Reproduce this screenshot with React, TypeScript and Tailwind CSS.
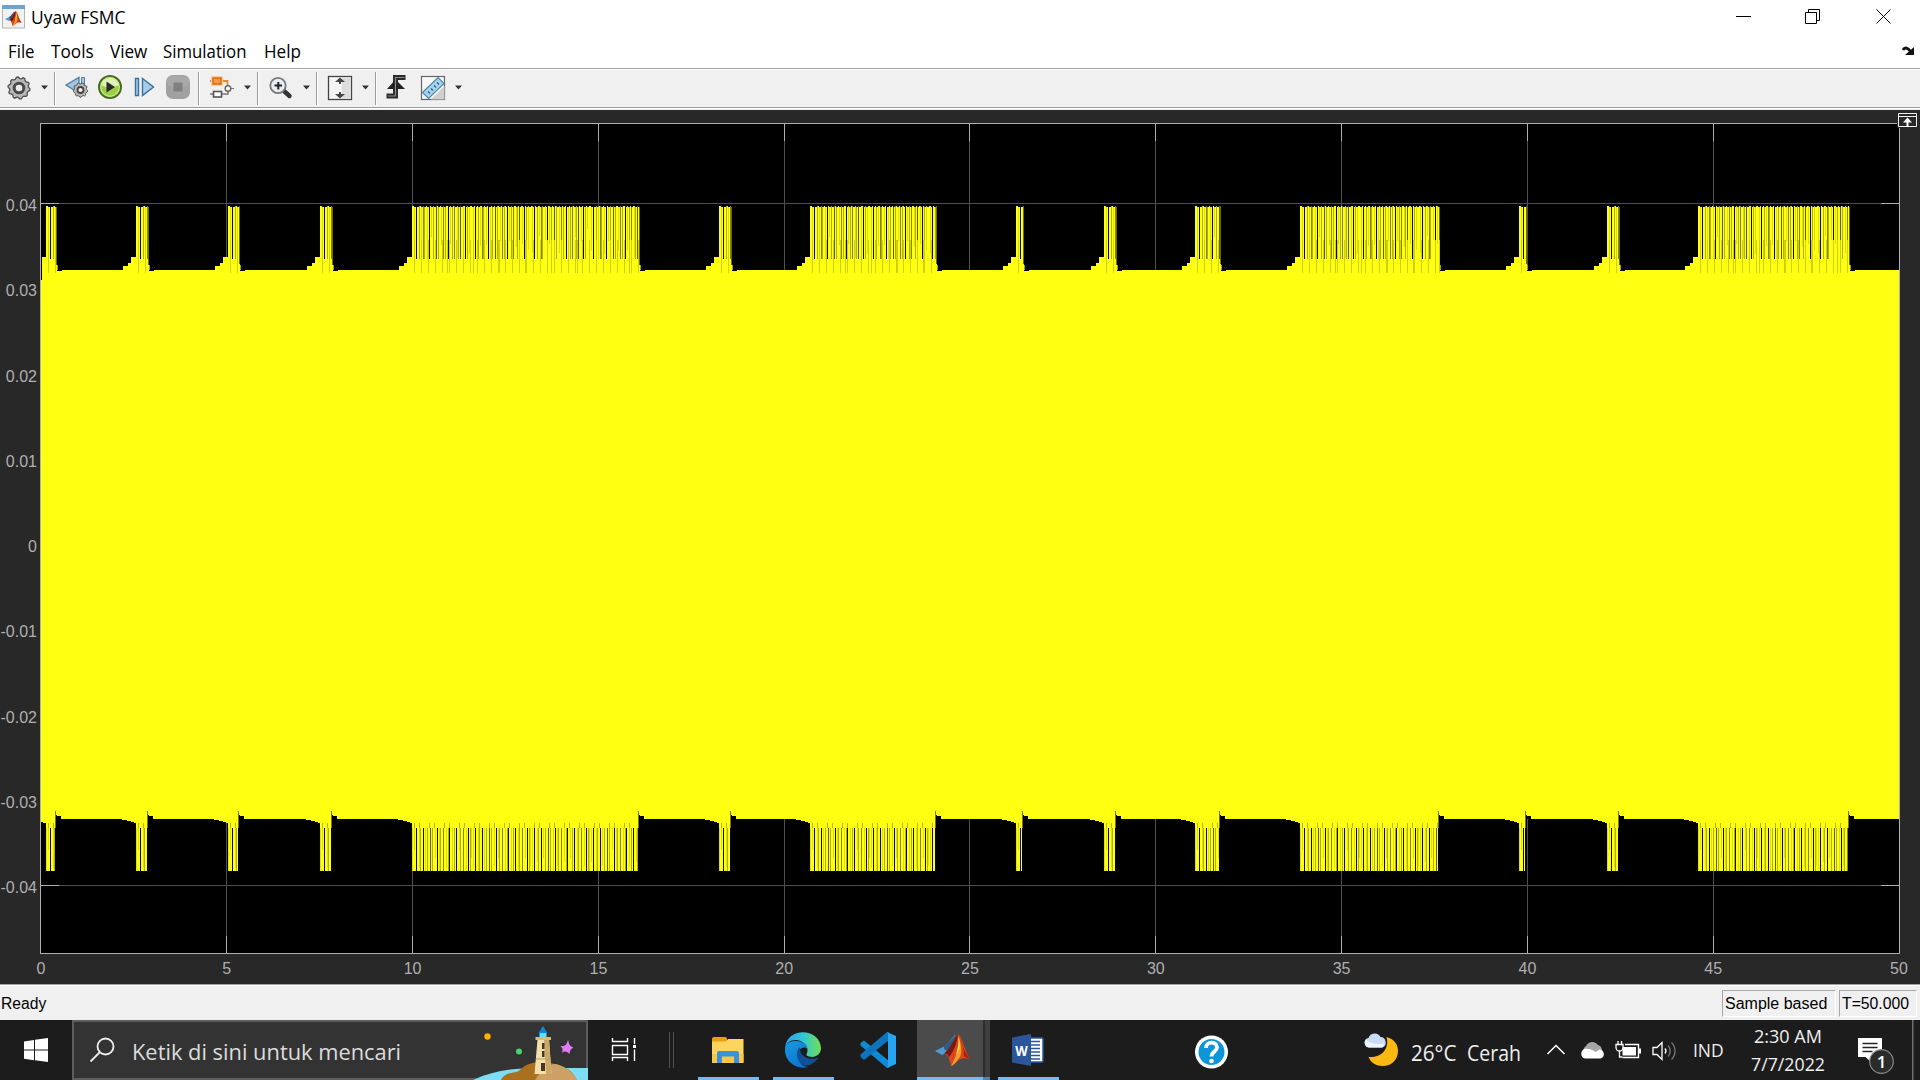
import React, { useLayoutEffect, useRef, useState } from 'react';

/* Text squeezed or stretched to a given advance width. */
function Fit({ w, className = '', children }: { w: number; className?: string; children: React.ReactNode }) {
  const ref = useRef<HTMLSpanElement>(null);
  const [k, setK] = useState(1);
  useLayoutEffect(() => {
    if (ref.current) setK(w / ref.current.offsetWidth);
  }, [w]);
  return (
    <span className={'block shrink-0 whitespace-nowrap ' + className} style={{ width: w }}>
      <span ref={ref} className="inline-block origin-left" style={{ transform: `scaleX(${k})` }}>
        {children}
      </span>
    </span>
  );
}

/* A drawing cell whose viewBox is expressed in window coordinates. */
function Cell({ x, y, w, h, children }: { x: number; y: number; w: number; h: number; children?: React.ReactNode }) {
  return (
    <svg className="block shrink-0" width={w} height={h} viewBox={`${x} ${y} ${w} ${h}`} fill="none">
      {children}
    </svg>
  );
}

function MatlabMark() {
  return (
    <g>
      <path d="M0 17 L9 12.5 C14 10 17 3 20 1 L23 6 L15 23 C13 20 10 19 7 21 Z" fill="#4f9bd0" />
      <path d="M9 12.5 C14 10 17 3 22 1 L15 19 L9 15 Z" fill="#2c5d8a" />
      <path d="M23 0 C19 5 16 13 9 20 C12 19 14 23 16 32 C22 29 24 22 35 25 C30 18 27 2 23 0Z" fill="#d8471c" />
      <path d="M23 0 C19 5 16 13 9 20 C12 19 13 20 14 23 C19 17 22 9 23 0Z" fill="#7c1712" />
      <path d="M23.5 2 C24 12 22 22 16 32 C20 31 22 26 25 23 C28 17 25 6 23.5 2Z" fill="#f79a2c" />
      <path d="M23.5 3 C24 9 23 15 21 20 C26 17 25 8 23.5 3Z" fill="#ffe04a" />
      <path d="M25 3 C27 10 29 18 35 25 L29 22.5 C29 15 27 8 25 3Z" fill="#a91f15" />
    </g>
  );
}

const gearPath = (cx: number, cy: number, r: number, n: number) => {
  const pts: string[] = [];
  for (let i = 0; i < n * 4; i++) {
    const a = ((i + 0.5) / (n * 4)) * Math.PI * 2;
    const rr = i % 4 < 2 ? r : r * 0.86;
    pts.push(`${(cx + Math.cos(a) * rr).toFixed(2)},${(cy + Math.sin(a) * rr).toFixed(2)}`);
  }
  return pts.join(' ');
};

const Caret = ({ x }: { x: number }) => <path d={`M${x - 3.5} 85.5h7l-3.5 4z`} fill="#333" />;
const Sep = ({ x }: { x: number }) => (
  <g shapeRendering="crispEdges">
    <rect x={x} y={72} width={1} height={33} fill="#9b9b9b" />
    <rect x={x + 1} y={72} width={1} height={33} fill="#fff" />
  </g>
);

function Toolbar() {
  const T = (x: number, w: number, c?: React.ReactNode) => (
    <Cell x={x} y={70} w={w} h={37}>
      {c}
    </Cell>
  );
  return (
    <div className="flex h-[42px] shrink-0 flex-col bg-[#f0f0f0]">
      <div className="h-px bg-[#a0a0a0]" />
      <div className="h-px bg-white" />
      <div className="flex h-[37px]">
        {T(0, 36, (
          <g>
            <polygon points={gearPath(19, 88, 11, 10)} fill="#b9b9b9" stroke="#505050" strokeWidth={1.3} />
            <circle cx={19} cy={88} r={4.8} fill="#eee" stroke="#4a4a4a" strokeWidth={3} />
          </g>
        ))}
        {T(36, 24, <g><Caret x={44.5} /><Sep x={54} /></g>)}
        {T(60, 34, (
          <g>
            <path d="M66 85 L79 77.5 V93Z" fill="#a5c6df" stroke="#4c7da5" strokeWidth={1.3} />
            <path d="M81.5 77.5h3v13h-3z" fill="#a5c6df" stroke="#4c7da5" />
            <polygon points={gearPath(80.5, 90, 7.2, 9)} fill="#b8b8b8" stroke="#555" />
            <circle cx={80.5} cy={90} r={3} fill="#eee" stroke="#444" strokeWidth={1.8} />
          </g>
        ))}
        {T(94, 34, (
          <g>
            <circle cx={110} cy={87} r={11} fill="#9bcf45" stroke="#4b6a22" strokeWidth={2} />
            <path d="M101 85a9.2 9.2 0 0 1 18 0c-5 3-13 3-18 0z" fill="#e0f3b8" />
            <circle cx={110} cy={87} r={9.3} stroke="#cdea90" strokeWidth={1.2} />
            <path d="M106.5 81.5 L115 87 L106.5 92.5Z" fill="#2b2b2b" />
          </g>
        ))}
        {T(128, 32, (
          <g fill="#a9cce6" stroke="#37709d" strokeWidth={1.4}>
            <path d="M135.5 78.5h3v17h-3z" />
            <path d="M142.5 78.5 L153.5 87 L142.5 95.5Z" />
          </g>
        ))}
        {T(160, 44, (
          <g>
            <rect x={166} y={75} width={24} height={24} rx={7} fill="#a1a1a1" />
            <rect x={167} y={76} width={22} height={11} rx={6} fill="#a9a9a9" />
            <rect x={173.5} y={82.5} width={9} height={9} fill="#808080" />
            <Sep x={198} />
          </g>
        ))}
        {T(204, 34, (
          <g>
            <path d="M222 94h6v-3M210 81h3M210 94h4" stroke="#777" strokeWidth={1.5} />
            <path d="M222 81h5.500v4" stroke="#e28a3c" strokeWidth={1.8} />
            <rect x={211} y={76} width={12} height={10} fill="#fbd28f" />
            <rect x={213} y={78} width={8} height={6} fill="#f29b45" stroke="#d96a12" strokeWidth={1.5} />
            <rect x={213.5} y={91.5} width={8} height={5.5} fill="#fff" stroke="#555" strokeWidth={1.6} />
            <circle cx={228} cy={88.5} r={2.8} fill="#fff" stroke="#666" strokeWidth={1.5} />
            <path d="M231 88.500h3" stroke="#777" />
          </g>
        ))}
        {T(238, 25, <g><Caret x={247.5} /><Sep x={257} /></g>)}
        {T(263, 34, (
          <g>
            <path d="M284 91 L289.500 96" stroke="#333" strokeWidth={4.4} strokeLinecap="round" />
            <circle cx={278} cy={85.5} r={7.7} fill="#e9eef2" stroke="#777" strokeWidth={1.8} />
            <path d="M274.500 85.500h7.500M278.300 82v7.500" stroke="#222" strokeWidth={2} />
          </g>
        ))}
        {T(297, 25, <g><Caret x={306.5} /><Sep x={316} /></g>)}
        {T(322, 34, (
          <g>
            <rect x={328.5} y={76.5} width={23} height={23} fill="#f4f4f4" stroke="#444" strokeWidth={1.3} />
            <path d="M342 77h9v22h-9z" fill="#ddd" />
            <path d="M335 82 L340 77.500 L345 82Z M335 94 L340 98.500 L345 94Z" fill="#444" />
            <path d="M340 80v4M340 92v4" stroke="#444" strokeWidth={2} />
          </g>
        ))}
        {T(356, 25, <g><Caret x={365.5} /><Sep x={375} /></g>)}
        {T(381, 34, (
          <g>
            <path d="M386.500 96H395.500V77.500H405.500" stroke="#2b2b2b" strokeWidth={5} />
            <path d="M387 89 L395.500 79.500 L405 89Z" fill="#222" />
            <path d="M388 96H395.500V77.500H404.500" stroke="#8a8a8a" strokeWidth={1.2} />
          </g>
        ))}
        {T(415, 34, (
          <g>
            <rect x={421.5} y={76.5} width={23} height={23} fill="#f7f7f7" stroke="#666" strokeWidth={1.2} />
            <path d="M431 99.500 L444.500 86V99.500Z" fill="#cfcfcf" />
            <path d="M422.500 92.500 L438 77.500 L444 83.500 L428.500 98.500Z" fill="#a5d3ee" stroke="#4f86ac" strokeWidth={1.2} />
            <path d="M428 91.500l2 2M431 88.500l2 2M434 85.500l2 2M437 82.500l2 2" stroke="#285f88" strokeWidth={1.2} />
          </g>
        ))}
        {T(449, 20, <Caret x={458.5} />)}
      </div>
      <div className="h-px bg-[#a0a0a0]" />
      <div className="h-px bg-white" />
      <div className="h-px bg-[#f0f0f0]" />
    </div>
  );
}

const bursts: [number, number][] = [
  [46, 57], [136, 149], [228, 240], [320, 333], [412, 640], [719, 732], [810, 937],
  [1016, 1024], [1104, 1117], [1195, 1221], [1300, 1440], [1519, 1527], [1607, 1620], [1698, 1850],
];
const gridX = [226, 412, 598, 784, 969, 1155, 1341, 1527, 1713];
const shades: Record<string, string> = { K: '#0a0a00', D: '#5c5c00', d: '#858500', m: '#b0b00c', l: '#dede10' };
const upper = 'YYlYKYYmYlYdmYYlYKYlYmYYDYmYYlYdYmYYKYlYmYdYYlmYDYYlYKYmYlY';
const lower = 'lYlYKYYlmYYKYlYmYYDYmYYlYKYlmYYdYYlYmKYYlYmYKYYlmYYdYYlYKYm';
const depths = [52, 30, 38, 47, 22, 40, 52, 34, 44];

function Burst({ a, b }: { a: number; b: number }) {
  const out: React.ReactNode[] = [];
  const n = b - a;
  for (let i = 0; i < n; i++) {
    const x = a + i;
    const c = upper[i % upper.length];
    const top = (i * 5) % 17 < 7 ? 206 : 207;
    out.push(<rect key={'t' + i} x={x} y={top} width={1} height={271 - top} />);
    if (i === n - 1) out.push(<rect key={'te'} x={x} y={top} width={1} height={58} fill="#6f6f00" />);
    else if (c !== 'Y' && i > 0) {
      const h = c === 'l' ? depths[i % 9] : 259 - top;
      out.push(<rect key={'u' + i} x={x} y={c === 'K' ? 206 : top} width={1} height={c === 'K' ? 53 : h} fill={shades[c]} />);
    }
    if (i % 7 === 2 || i % 26 === 9) out.push(<rect key={'v' + i} x={x} y={240} width={1} height={33} fill="#d0d00e" />);
  }
  const m = n - 2;
  for (let i = 0; i < m; i++) {
    const x = a + i;
    const c = lower[i % lower.length];
    out.push(<rect key={'b' + i} x={x} y={819} width={1} height={52} />);
    if (c !== 'Y') {
      const h = c === 'l' ? depths[(i * 2) % 9] : 43;
      out.push(<rect key={'w' + i} x={x} y={828} width={1} height={Math.min(43, h)} fill={shades[c]} />);
    }
    if (i % 5 === 2 && i % 3 !== 0) out.push(<rect key={'z' + i} x={x} y={823} width={1} height={5} fill="#b8b80c" />);
  }
  return (
    <g fill="#ffff11">
      {a < 50 ? (
        <g>
          <rect x={42} y={257} width={6} height={14} />
          <rect x={41} y={819} width={5} height={3} />
          <rect x={43} y={819} width={3} height={4} />
        </g>
      ) : (
        <g>
          <path d={`M${a - 13} 271v-5h5v-3h3v-6h5v14z`} />
          <path d={`M${a - 14} 819h14v4h-2v-1h-3v-1h-4v-1h-5z`} />
        </g>
      )}
      <rect x={b} y={265} width={1} height={6} fill="#a0a00a" />
      <rect x={b} y={270} width={5} height={1} fill="#000" />
      <rect x={a} y={819} width={m} height={9} />
      {out}
      <rect x={b - 2} y={811} width={1} height={17} fill="#75750a" />
      <rect x={b - 1} y={815} width={1} height={4} fill="#000" />
      <rect x={b} y={816} width={4} height={3} fill="#000" />
    </g>
  );
}

function Scope() {
  return (
    <svg className="block shrink-0" width={1920} height={874} viewBox="0 110 1920 874">
      <rect x={0} y={110} width={1920} height={874} fill="#282828" />
      <g shapeRendering="crispEdges">
        <rect x={40} y={123} width={1860} height={831} fill="#000" />
        <g fill="#4f4f4f">
          {gridX.map((x) => <rect key={x} x={x} y={124} width={1} height={829} />)}
          <rect x={41} y={203} width={1858} height={1} />
          <rect x={41} y={885} width={1858} height={1} />
        </g>
        <rect x={41} y={270} width={1858} height={549} fill="#ffff11" />
        {bursts.map(([a, b]) => <Burst key={a} a={a} b={b} />)}
        <rect x={41} y={257} width={1} height={23} fill="#000" />
        <g fill="#afafaf">
          {gridX.map((x) => <rect key={x} x={x} y={123} width={1} height={18} />)}
          {gridX.map((x) => <rect key={x} x={x} y={936} width={1} height={18} />)}
          {[203, 885].map((y) => (
            <g key={y}>
              <rect x={41} y={y} width={18} height={1} />
              <rect x={1881} y={y} width={18} height={1} />
            </g>
          ))}
          <rect x={40} y={123} width={1860} height={1} />
          <rect x={40} y={953} width={1860} height={1} />
          <rect x={40} y={123} width={1} height={831} />
          <rect x={1899} y={123} width={1} height={831} />
        </g>
      </g>
      <g fill="#afafaf" fontFamily="Liberation Sans, Arial, sans-serif" fontSize={16}>
        {['0.04', '0.03', '0.02', '0.01', '0', '-0.01', '-0.02', '-0.03', '-0.04'].map((t, i) => (
          <text key={t} x={37} y={Math.round(211 + i * 85.25)} textAnchor="end">{t}</text>
        ))}
        {[0, 5, 10, 15, 20, 25, 30, 35, 40, 45, 50].map((v, i) => (
          <text key={v} x={41 + i * 185.8} y={974} textAnchor="middle">{v}</text>
        ))}
      </g>
      <rect x={1897} y={112} width={21} height={16} fill="#282828" />
      <path d="M1898.500 113.500h18v13h-18zM1898.500 116.500h18" stroke="#f2f2f2" fill="none" />
      <path d="M1907.500 127v-7" stroke="#fff" strokeWidth={2} />
      <path d="M1903 122.500l4.500-5 4.500 5z" fill="#fff" />
    </svg>
  );
}

function Search() {
  return (
    <div className="flex h-[60px] w-[516px] shrink-0 border-2 border-[#5d5d5d] bg-[#333]">
      <Cell x={74} y={1022} w={58} h={56}>
        <circle cx={105.5} cy={1046.5} r={8} stroke="#eee" strokeWidth={1.8} />
        <path d="M99.500 1052.500 L90.500 1061.500" stroke="#eee" strokeWidth={1.8} />
      </Cell>
      <Fit w={269} className="pt-[13px] text-[22px] leading-[32px] text-[#dcdcdc]">Ketik di sini untuk mencari</Fit>
      <div className="-mr-[2px] ml-auto">
        <Cell x={470} y={1022} w={118} h={58}>
          <path d="M473 1080 C495 1070 515 1068 540 1068H588V1080Z" fill="#7edcf5" />
          <path d="M501 1080 C506 1070 516 1075 521 1069 C526 1064 534 1062 540 1062 C549 1062 557 1064 562 1067 C569 1068 573 1073 577 1080Z" fill="#a8701f" />
          <path d="M535 1080 C542 1068 551 1063 556 1064 C567 1067 574 1073 577 1080Z" fill="#cda066" />
          <circle cx={487.5} cy={1036.5} r={3.2} fill="#ffb000" />
          <circle cx={519} cy={1051.5} r={3} fill="#4cd070" />
          <path d="M568 1040 C569.500 1045.500 570 1046 573.500 1047.500 C570 1049.500 570.500 1050 569.500 1054 C566 1051 565 1051 562 1053 C563 1049.500 563 1049 560.500 1046 C565 1046 566 1046 568 1040Z" fill="#e27bfa" />
          <path d="M537.500 1039.500 H549 L551.500 1074 H534.500Z" fill="#f1dfae" />
          <path d="M544 1039.500 H549 L551.500 1074 H546Z" fill="#caa867" />
          <path d="M535.500 1037h15.500v3h-15.500z" fill="#d9b976" />
          <path d="M536 1059h14.500" stroke="#bd9a59" />
          <path d="M539.500 1032h7v5h-7z" fill="#5fe0f2" />
          <path d="M538.500 1033 C541 1030 541 1028 543 1026 C545 1028 545 1030 547.500 1033Z" fill="#1683d2" />
          <path d="M542 1043h2.500v6H542zM542 1051h2.500v6H542zM541 1063h4v8h-4z" fill="#4c3520" />
        </Cell>
      </div>
    </div>
  );
}

function Taskbar() {
  const T = (x: number, w: number, c?: React.ReactNode) => (
    <Cell x={x} y={1020} w={w} h={60}>{c}</Cell>
  );
  const line = (x: number, w: number) => <rect x={x} y={1077} width={w} height={3} fill="#76b9ed" />;
  return (
    <div className="flex h-[60px] shrink-0 bg-[#1c1c1c] text-[#f0f0f0]">
      {T(0, 72, (
        <path fill="#fff" d="M24 1041.500 L34 1040v9.500H24zM35 1039.800 L48 1038v11.500H35zM24 1050.500h10v9.700L24 1058.700zM35 1050.500h13V1062l-13-1.800z" />
      ))}
      <Search />
      {T(588, 72, (
        <g stroke="#fff" strokeWidth={1.4}>
          <path d="M612.500 1045.500h15v9h-15zM612.500 1038v3.500h15V1038M612.500 1061v-3.500h15v3.500M634.500 1038v6M634.500 1049.500v11.500" />
          <path d="M633 1045h3v3h-3z" fill="#fff" stroke="none" />
        </g>
      ))}
      {T(660, 30, <path d="M669.500 1032v36M673.500 1032v36" stroke="#505050" />)}
      {T(690, 76, (
        <g>
          <rect x={712} y={1037} width={15} height={8} rx={2} fill="#e8a10c" />
          <path d="M712 1041.500h14l2-2.500h15.500v24H712z" fill="#ffd45e" />
          <path d="M712 1054h31.500v8.500H712z" fill="#fbc644" />
          <path d="M717 1063v-10a2 2 0 0 1 2-2h18a2 2 0 0 1 2 2v10h-5v-6.500h-12V1063z" fill="#3a92dc" />
          {line(698, 61)}
        </g>
      ))}
      {T(766, 76, (
        <g>
          <defs>
            <linearGradient id="edgeTop" x1="785" y1="1050" x2="821" y2="1050" gradientUnits="userSpaceOnUse">
              <stop offset="0" stopColor="#2f9fe6" />
              <stop offset="0.5" stopColor="#33c6d8" />
              <stop offset="1" stopColor="#6fe04e" />
            </linearGradient>
            <linearGradient id="edgeLow" x1="785" y1="1040" x2="805" y2="1068" gradientUnits="userSpaceOnUse">
              <stop offset="0" stopColor="#1a9be0" />
              <stop offset="1" stopColor="#0b6fd0" />
            </linearGradient>
          </defs>
          <path d="M785 1048 C787 1026 820 1028 821 1048 C821 1055 815 1058 809 1056.500 C805 1055.500 807 1054 807.500 1051 C808 1044 801 1040 796 1040 C790 1040 786 1043 785 1048Z" fill="url(#edgeTop)" />
          <path d="M785 1048 C786 1043 790 1041 796 1041 C802 1041 807 1044 807.500 1049 C803 1045 797 1050 798 1057 C799 1064 805 1067 808 1067 C797 1070 784 1062 785 1048Z" fill="url(#edgeLow)" />
          <path d="M800 1047 C795 1051 796 1060 803 1065 C806 1067 813 1065 818.500 1058 C819 1057 818 1057.500 817 1058 C809 1061 799 1056 800 1047Z" fill="#114f96" />
          {line(773, 61)}
        </g>
      ))}
      {T(842, 75, (
        <g>
          <path d="M860.500 1043 L864 1040.500 L889 1061 V1067.500 L887 1068 L860.500 1045.500Z" fill="#0f8ad4" />
          <path d="M860.500 1057 L864 1060 L889 1040V1032.500L887 1032 L860.500 1054.500Z" fill="#0d74bd" />
          <path d="M887 1032 L896 1036V1064L887 1068 C888 1067 888 1066 888 1065V1035 C888 1034 888 1033 887 1032Z" fill="#25a5f2" />
        </g>
      ))}
      {T(917, 73, (
        <g>
          <rect x={917} y={1020} width={66} height={60} fill="#4b4b4b" />
          <rect x={983} y={1020} width={2} height={60} fill="#2c2c2c" />
          <rect x={985} y={1020} width={5} height={60} fill="#3f3f3f" />
          <g transform="translate(935 1034)"><MatlabMark /></g>
          {line(917, 66)}
          <rect x={983} y={1077} width={7} height={3} fill="#5583a8" />
        </g>
      ))}
      {T(990, 190, (
        <g>
          <rect x={1028} y={1038} width={15} height={24} rx={1} fill="#fff" stroke="#2b579a" strokeWidth={1.5} />
          <path d="M1031 1041.500h9M1031 1045h9M1031 1048.500h9M1031 1052h9M1031 1055.500h9M1031 1059h9" stroke="#2b579a" strokeWidth={1.5} />
          <path d="M1012 1037.500 L1031 1034V1066L1012 1062.500Z" fill="#2b579a" />
          <text x={1021.5} y={1056} textAnchor="middle" fontFamily="Open Sans, sans-serif" fontWeight={700} fontSize={15} textLength={12.5} lengthAdjust="spacingAndGlyphs" fill="#fff">W</text>
          {line(998, 61)}
        </g>
      ))}
      {T(1180, 180, (
        <g>
          <circle cx={1211.5} cy={1052} r={16.5} fill="#fff" />
          <circle cx={1211.5} cy={1052} r={13} fill="#0c95d9" />
          <path d="M1206 1048 C1206 1041 1217 1041 1217 1047.500 C1217 1051.500 1211.500 1051.500 1211.500 1056.500" stroke="#fff" strokeWidth={3.8} />
          <circle cx={1211.5} cy={1061} r={2.3} fill="#fff" />
        </g>
      ))}
      {T(1360, 51, (
        <g>
          <path d="M1386.500 1037 C1394 1039 1398 1044 1398 1051 C1398 1060 1391 1066 1383 1066 C1376 1066 1371 1063 1368.500 1057 C1380 1058 1390 1050 1386.500 1037Z" fill="#fcb913" />
          <path d="M1369 1047.500a4.800 4.800 0 0 1-.5-9.500 6.500 6.500 0 0 1 12-1 5.500 5.500 0 0 1 2 10.500z" fill="#c9dcf6" />
          <path d="M1369 1047.500a4.800 4.800 0 0 1-3-8 c6 5 12 5 18 4a5.500 5.500 0 0 1-2 4z" fill="#eef4fc" />
        </g>
      ))}
      <Fit w={45} className="mr-[11px] pt-[16px] text-[22px] leading-[32px]">26°C</Fit>
      <Fit w={54} className="pt-[16px] text-[22px] leading-[32px]">Cerah</Fit>
      {T(1521, 172, (
        <g>
          <path d="M1547.500 1054l8.500-8.500 8.500 8.500" stroke="#fff" strokeWidth={1.5} />
          <path d="M1584 1052 a5 5 0 0 1 2-6 a7 7 0 0 1 12-1 a6 6 0 0 1 4 5 L1592 1056z" fill="#a6a6a6" />
          <path d="M1585 1058.500a5 5 0 0 1-.5-9.500 c5-1 8 1 11 3l4-2.500a4.600 4.600 0 0 1 1 9z" fill="#fff" />
          <path d="M1625 1044.500h13.500v13h-16" stroke="#fff" strokeWidth={1.4} />
          <rect x={1622.5} y={1047} width={13.5} height={8.5} fill="#fff" />
          <rect x={1639} y={1048.5} width={2} height={5} fill="#fff" />
          <path d="M1616 1044.500h7v3a3.500 3.500 0 0 1-7 0zM1618 1041v3M1621.500 1041v3M1619.500 1051v6h3" stroke="#fff" strokeWidth={1.3} fill="#1c1c1c" />
          <path d="M1653 1047.500h4l5-5v17l-5-5h-4z" stroke="#fff" strokeWidth={1.3} />
          <path d="M1665 1048.500a4 4 0 0 1 0 5" stroke="#fff" strokeWidth={1.3} />
          <path d="M1668 1045.500a8 8 0 0 1 0 11M1671.500 1042.500a12 12 0 0 1 0 17" stroke="#777" strokeWidth={1.3} />
        </g>
      ))}
      <Fit w={31} className="pt-[17px] text-[18px] leading-[26px]">IND</Fit>
      <div className="flex w-[128px] shrink-0 flex-col items-center pt-[2px] text-[18px] leading-[28px]">
        <Fit w={68}>2:30 AM</Fit>
        <Fit w={74}>7/7/2022</Fit>
      </div>
      {T(1852, 68, (
        <g>
          <path d="M1858 1038h24v19h-11.500v4.500l-5-4.500h-7.500z" fill="#fff" />
          <path d="M1862.500 1043.500h15M1862.500 1047.500h15M1862.500 1051.500h10" stroke="#222" strokeWidth={1.3} />
          <circle cx={1881.5} cy={1061.5} r={11.8} fill="#2b2b2b" stroke="#8a8a8a" strokeWidth={1.2} />
          <text x={1881.5} y={1067.500} textAnchor="middle" fontFamily="Open Sans, sans-serif" fontWeight={600} fontSize={17} fill="#fff">1</text>
          <rect x={1912} y={1020} width={1.5} height={60} fill="#6d6d6d" />
        </g>
      ))}
    </div>
  );
}

export default function App() {
  return (
    <div className="flex h-[1080px] w-[1920px] flex-col overflow-hidden bg-white font-['Open_Sans','Noto_Sans',sans-serif] text-black">
      <div className="flex h-[36px] shrink-0">
        <Cell x={0} y={0} w={31} h={36}>
          <rect x={2.5} y={5.5} width={22} height={22.5} fill="#f2f2f2" stroke="#b5b5b5" />
          <rect x={2} y={5} width={23} height={4} fill="#6ea3cc" />
          <g transform="translate(5 11) scale(.47)"><MatlabMark /></g>
        </Cell>
        <Fit w={94} className="pt-[4px] text-[18px] leading-[26px]">Uyaw FSMC</Fit>
        <div className="ml-auto">
          <Cell x={1720} y={0} w={200} h={36}>
            <g stroke="#000">
              <path d="M1736 16.500h15M1805.500 12.500h11v11h-11zM1808.500 12v-2.500h11v11h-2.500M1876.500 9.500l14 14M1890.500 9.500l-14 14" />
            </g>
          </Cell>
        </div>
      </div>
      <div className="flex h-[32px] shrink-0 pl-[8px] text-[18px] leading-[26px]">
        <Fit w={27} className="mr-[16px] pt-[2px]">File</Fit>
        <Fit w={43} className="mr-[16px] pt-[2px]">Tools</Fit>
        <Fit w={37} className="mr-[16px] pt-[2px]">View</Fit>
        <Fit w={84} className="mr-[17px] pt-[2px]">Simulation</Fit>
        <Fit w={37} className="pt-[2px]">Help</Fit>
        <div className="ml-auto">
          <Cell x={1890} y={36} w={30} h={32}>
            <path d="M1903 50 C1905 46.500 1908 48 1911 52" stroke="#111" strokeWidth={2.8} />
            <path d="M1914 47v8h-9z" fill="#111" />
          </Cell>
        </div>
      </div>
      <Toolbar />
      <Scope />
      <div className="h-px shrink-0 bg-[#a0a0a0]" />
      <div className="h-px shrink-0 bg-white" />
      <div className="flex h-[34px] shrink-0 bg-[#f0f0f0] pt-[4px] font-['Liberation_Sans',Arial,sans-serif] text-[16px] leading-[26px]">
        <Fit w={45} className="ml-px pt-px">Ready</Fit>
        <div className="ml-auto flex h-[27px] w-[114px] border border-t-[#a8a8a8] border-r-white border-b-white border-l-[#a8a8a8] pl-[2px]">
          <Fit w={102}>Sample based</Fit>
        </div>
        <div className="mr-[3px] ml-[3px] flex h-[27px] w-[78px] border border-t-[#a8a8a8] border-r-white border-b-white border-l-[#a8a8a8] pl-[2px]">
          <Fit w={67}>T=50.000</Fit>
        </div>
      </div>
      <Taskbar />
    </div>
  );
}
